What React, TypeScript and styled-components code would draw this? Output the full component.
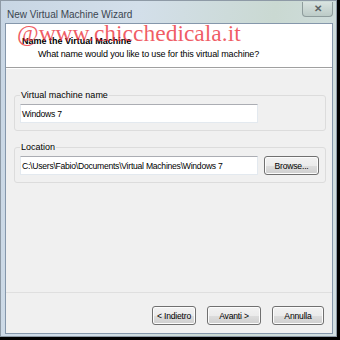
import styled, { createGlobalStyle } from 'styled-components';

const GlobalStyle = createGlobalStyle`
  html, body {
    margin: 0;
    padding: 0;
    width: 340px;
    height: 340px;
    overflow: hidden;
    background: #000;
  }
`;

const Window = styled.div`
  position: relative;
  width: 337px;
  height: 337px;
  box-sizing: border-box;
  display: flex;
  flex-direction: column;
  padding: 0 3px 2px 4px;
  background: linear-gradient(100deg, #c8d6e4 0%, #d3dfea 35%, #cad9d2 70%, #d2dfe3 100%);
  border: 1px solid #8e9aa6;
  font-family: 'Liberation Sans', Arial, sans-serif;
  font-size: 9px;
  color: #000;
`;

const TitleBar = styled.div`
  height: 22px;
  display: flex;
  align-items: center;
  justify-content: space-between;
`;

const Title = styled.span`
  font-size: 10px;
  color: #3c4650;
  padding: 4px 0 0 2px;
`;

const CloseButton = styled.div`
  width: 31px;
  height: 15px;
  margin-top: -6px;
  box-sizing: border-box;
  border: 1px solid #8e9c9c;
  border-top: none;
  border-radius: 0 0 4px 4px;
  background: linear-gradient(#d9e3e0, #bccbc7);
  display: flex;
  align-items: center;
  justify-content: center;
  color: #5b6365;
  font-weight: bold;
  font-size: 10px;
`;

const Client = styled.div`
  flex: 1;
  display: flex;
  flex-direction: column;
  border: 1px solid #8597ab;
  background: #f0f0f0;
`;

const Header = styled.div`
  position: relative;
  height: 44px;
  flex-shrink: 0;
  background: #fff;
  border-bottom: 1px solid #a0a0a0;
  box-shadow: 0 1px 0 #fff;
  padding: 12px 0 0 16px;
  box-sizing: border-box;
`;

const HeaderTitle = styled.div`
  font-weight: bold;
  font-size: 9px;
`;

const HeaderText = styled.div`
  padding: 3px 0 0 16px;
  font-size: 9px;
  letter-spacing: -0.15px;
`;

const Watermark = styled.div`
  position: absolute;
  left: 11px;
  top: -4px;
  font-family: 'Liberation Serif', 'Times New Roman', serif;
  font-size: 23.5px;
  color: rgba(235, 40, 50, 0.75);
  pointer-events: none;
  white-space: nowrap;
`;

const Body = styled.div`
  flex: 1;
  display: flex;
  flex-direction: column;
  gap: 16px;
  padding: 27px 6px 0 8px;
`;

const Group = styled.div`
  position: relative;
  border: 1px solid #dcdcdc;
  border-radius: 3px;
  padding: 8px 6px 7px 5px;
  display: flex;
  gap: 6px;
  align-items: center;
`;

const Legend = styled.span`
  position: absolute;
  top: -6px;
  left: 5px;
  padding: 0 1px;
  background: #f0f0f0;
  font-size: 9px;
`;

const Input = styled.div`
  width: 238px;
  height: 19px;
  box-sizing: border-box;
  background: #fff;
  border: 1px solid #e3e9ef;
  border-top-color: #abadb3;
  display: flex;
  align-items: center;
  padding-left: 1px;
  font-size: 8.6px;
  letter-spacing: -0.25px;
  white-space: nowrap;
`;

const Button = styled.div<{ $w: number }>`
  width: ${(p) => p.$w}px;
  height: 19px;
  box-sizing: border-box;
  border: 1px solid #707070;
  border-radius: 3px;
  background: linear-gradient(#f2f2f2 0%, #ebebeb 50%, #dddddd 51%, #cfcfcf 100%);
  box-shadow: inset 0 0 0 1px #fcfcfc;
  display: flex;
  align-items: center;
  justify-content: center;
  font-size: 8.6px;
  letter-spacing: -0.2px;
`;

const Footer = styled.div`
  height: 41px;
  flex-shrink: 0;
  border-top: 1px solid #dfdfdf;
  display: flex;
  justify-content: flex-end;
  align-items: flex-start;
  padding: 13px 8px 0 0;
  box-sizing: border-box;
  gap: 11px;
`;

export default function App() {
  return (
    <>
      <GlobalStyle />
      <Window>
        <TitleBar>
          <Title>New Virtual Machine Wizard</Title>
          <CloseButton>✕</CloseButton>
        </TitleBar>
        <Client>
          <Header>
            <HeaderTitle>Name the Virtual Machine</HeaderTitle>
            <HeaderText>What name would you like to use for this virtual machine?</HeaderText>
            <Watermark>@www.chicchedicala.it</Watermark>
          </Header>
          <Body>
            <Group>
              <Legend>Virtual machine name</Legend>
              <Input>Windows 7</Input>
            </Group>
            <Group>
              <Legend>Location</Legend>
              <Input>C:\Users\Fabio\Documents\Virtual Machines\Windows 7</Input>
              <Button $w={55}>Browse...</Button>
            </Group>
          </Body>
          <Footer>
            <Button $w={44}>&lt; Indietro</Button>
            <Button $w={54}>Avanti &gt;</Button>
            <Button $w={52}>Annulla</Button>
          </Footer>
        </Client>
      </Window>
    </>
  );
}
